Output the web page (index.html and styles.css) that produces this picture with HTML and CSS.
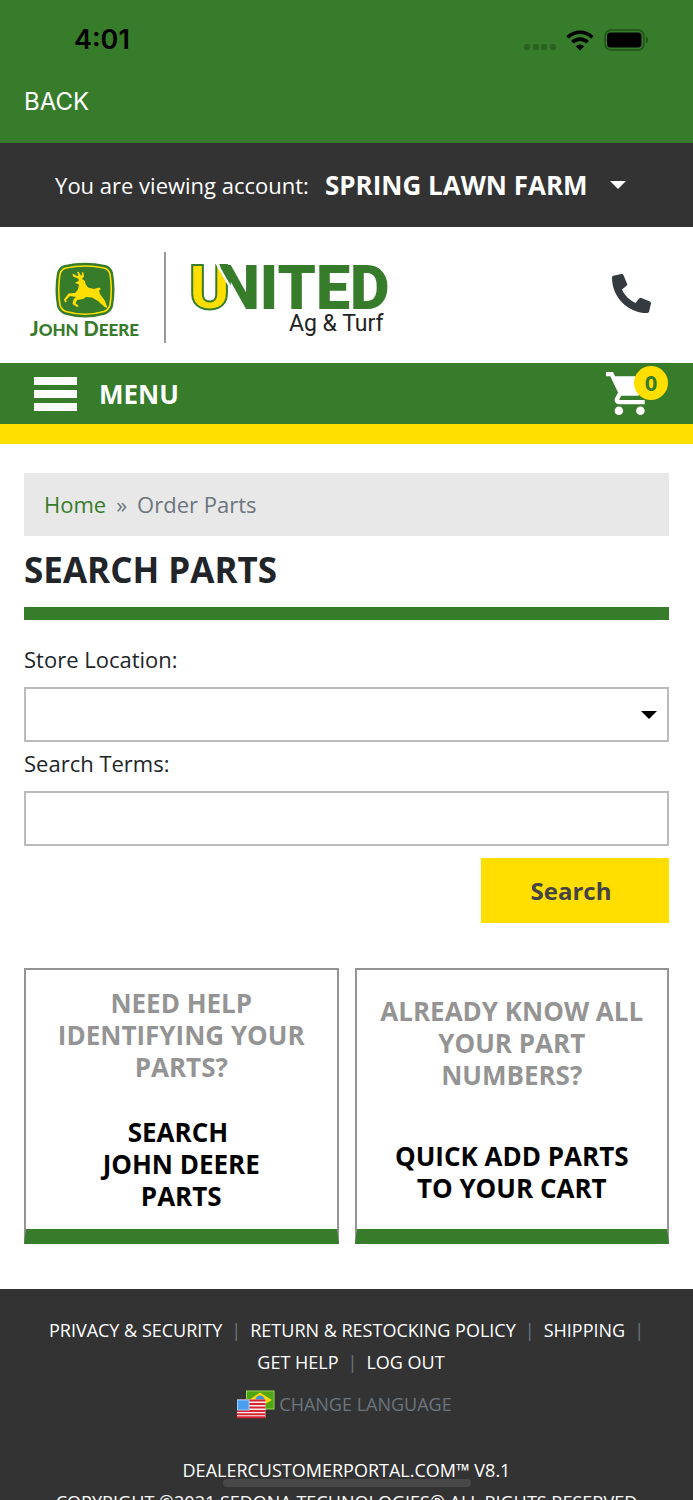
FILE: index.html
```html
<!DOCTYPE html>
<html lang="en">
<head>
    <meta charset="UTF-8">
    <meta name="viewport" content="width=device-width, initial-scale=1.0">
    <title>Search Parts</title>
    <link rel="stylesheet" href="styles.css">
</head>
<body>
    <div class="app">
        <div class="top-bar">
            <div class="status">
                <span class="time">4:01</span>
                <div class="status-icons">
                    <svg width="32" height="20" viewBox="0 0 32 20" fill="#2a6021">
                        <rect x="0" y="14" width="6" height="6" rx="2" />
                        <rect x="9" y="14" width="6" height="6" rx="2" />
                        <rect x="17" y="14" width="6" height="6" rx="2" />
                        <rect x="26" y="14" width="6" height="6" rx="2" />
                    </svg>
                    <svg width="28" height="21" viewBox="0 0 28 21">
                        <g fill="none" stroke="#000" stroke-width="3.6">
                            <path d="M1.6 7.4a17.6 17.6 0 0 1 24.8 0" />
                            <path d="M6.4 12.3a10.8 10.8 0 0 1 15.2 0" />
                        </g>
                        <path d="M14 20.5l-4.2-4.3a6 6 0 0 1 8.4 0z" />
                    </svg>
                    <svg width="44" height="22" viewBox="0 0 44 22">
                        <rect x="1" y="1" width="39" height="20" rx="6" fill="none" stroke="#1f4f19" stroke-width="1.4" />
                        <rect x="3" y="3.4" width="34.5" height="15" rx="3.5" />
                        <path d="M42 7.5q2 1 2 3.5t-2 3.5z" fill="#1f4f19" />
                    </svg>
                </div>
            </div>
            <a class="back" href="#">BACK</a>
        </div>

        <div class="account">
            <label for="account">You are viewing account:</label>
            <div class="select-wrap account-wrap">
                <select id="account">
                    <option>SPRING LAWN FARM</option>
                </select>
            </div>
        </div>

        <header class="header">
            <a href="#" aria-label="United Ag &amp; Turf">
                <svg class="logo" width="370" height="100" viewBox="26 243 370 100">
                    <!-- Deer badge -->
                    <path d="M65 266.5Q85 262 105 266.5Q110 268 111.5 273Q114.5 290 111.5 306Q110 311 105 313Q85 319 65 313Q60 311 58.5 306Q55.5 290 58.5 273Q60 268 65 266.5z" fill="#367c2b" stroke="#367c2b" stroke-width="3" />
                    <path d="M66 268Q85 264 104 268Q108.5 269 110 274Q112.5 290 110 305Q108.5 310 104 311.500Q85 317 66 311.5Q61.5 310 60 305Q57.5 290 60 274Q61.5 269 66 268z" fill="none" stroke="#ffde00" stroke-width="1.6" />
                    <path d="M75 283L79 280.500 78 278.500 73 276.500 72.500 273.500 77 276 78.500 275.500 77 272 78.500 271.800 81 275.500 82 275 81.800 272.500 83.300 272.300 84 276.500 82 279 85 281 85.500 284 88 287.500 94 289 99 287.500 101 289 99 290.500 100 294 105 301 107.500 308 104.500 307 98 301 92 297.500 86 297 83 299 77 300 75.500 303.500 79 306 77 307 72.500 304 73.500 299.500 76 297 70 296 66 300 67 301.500 65 302.500 64 299.500 68.500 293.500 75 293 78 289.500 79 284.500z" fill="#ffde00" />
                    <text x="30" y="336" class="logo-deere">J<tspan class="logo-small">OHN</tspan> D<tspan class="logo-small">EERE</tspan></text>
                    <rect x="164" y="252" width="2" height="91" fill="#999" />
                    <!-- The U shows below the diagonal of the N -->
                    <clipPath id="diagonal">
                        <path d="M216 260L246 312H396V260z" />
                    </clipPath>
                    <text x="189" y="309" class="logo-u">U</text>
                    <path d="M215 260L245 312" stroke="#fff" stroke-width="3" />
                    <text x="217" y="309" class="logo-united" clip-path="url(#diagonal)">NITED</text>
                    <text x="289" y="331" class="logo-turf">Ag &amp; Turf</text>
                </svg>
            </a>
            <a class="phone" href="#" aria-label="Call us">
                <svg width="39" height="39" viewBox="0 0 512 512" fill="#343a40">
                    <path transform="matrix(-1 0 0 1 512 0)" d="M493.4 24.6l-104-24c-11.3-2.6-22.9 3.3-27.5 13.9l-48 112c-4.2 9.8-1.4 21.3 6.9 28l60.6 49.6c-36 76.7-98.9 140.5-177.2 177.2l-49.6-60.6c-6.8-8.3-18.2-11.1-28-6.9l-112 48C3.9 366.5-2 378.1.6 389.4l24 104C27.1 504.2 36.7 512 48 512c256.1 0 464-207.5 464-464 0-11.2-7.7-20.9-18.6-23.4z" />
                </svg>
            </a>
        </header>

        <nav class="nav">
            <button class="menu" type="button">
                <span class="bars"><i></i><i></i><i></i></span>
                MENU
            </button>
            <a class="cart" href="#" aria-label="Cart">
                <svg width="43" height="43" viewBox="1 2 20 20" fill="#fff">
                    <path d="M7 18c-1.1 0-1.99.9-1.99 2S5.9 22 7 22s2-.9 2-2-.9-2-2-2zM1 2v2h2l3.6 7.59-1.35 2.45c-.16.28-.25.61-.25.96 0 1.1.9 2 2 2h12v-2H7.42c-.14 0-.25-.11-.25-.25l.03-.12.9-1.63h7.45c.75 0 1.41-.41 1.75-1.03l3.58-6.49A1 1 0 0 0 20 4H5.21l-.94-2H1zm16 16c-1.1 0-1.99.9-1.99 2s.89 2 1.99 2 2-.9 2-2-.9-2-2-2z" />
                </svg>
                <span class="badge">0</span>
            </a>
        </nav>

        <main class="content">
            <div class="breadcrumb">
                <a href="#">Home</a>
                <span>»</span>
                <span>Order Parts</span>
            </div>
            <h1>SEARCH PARTS</h1>

            <form class="search-form">
                <label for="store">Store Location:</label>
                <div class="select-wrap">
                    <select class="field" id="store">
                        <option></option>
                    </select>
                </div>
                <label for="terms">Search Terms:</label>
                <input class="field" type="text" id="terms">
                <button class="btn" type="button">Search</button>
            </form>

            <div class="cards">
                <a class="card" href="#">
                    <span class="question">NEED HELP IDENTIFYING YOUR PARTS?</span>
                    <span class="action">SEARCH&nbsp;<br>JOHN DEERE<br>PARTS</span>
                </a>
                <a class="card" href="#">
                    <span class="question">ALREADY KNOW ALL YOUR PART NUMBERS?</span>
                    <span class="action">QUICK ADD PARTS TO YOUR CART</span>
                </a>
            </div>
        </main>

        <footer class="footer">
            <ul class="links">
                <li><a href="#">PRIVACY &amp; SECURITY</a></li>
                <li><a href="#">RETURN &amp; RESTOCKING POLICY</a></li>
                <li><a href="#">SHIPPING</a></li>
                <li><a href="#">GET HELP</a></li>
                <li><a href="#">LOG OUT</a></li>
            </ul>
            <a class="language" href="#">
                <svg width="38" height="32" viewBox="0 -2 38 32">
                    <!-- Brazil -->
                    <rect x="9.5" y="1" width="27.5" height="18" fill="#4fa512" stroke="#9bd45a" />
                    <path d="M12 10l11-7.5 12 7.5-12 7z" fill="#fdd80c" />
                    <circle cx="23" cy="10" r="4.5" fill="#3c8fd8" />
                    <!-- USA -->
                    <rect x="0" y="9.5" width="28.5" height="18.5" fill="#f4f0f0" />
                    <path d="M0 10.5h28.5M0 14h28.5M0 17.5h28.5M0 21h28.5M0 24.2h28.5M0 27.3h28.5" stroke="#d8232e" stroke-width="2" />
                    <rect x="0.5" y="10" width="11.5" height="10" fill="#4b9ff0" stroke="#9accff" />
                </svg>
                CHANGE LANGUAGE
            </a>
            <p>DEALERCUSTOMERPORTAL.COM™ V8.1</p>
            <p>COPYRIGHT ©2021 SEDONA TECHNOLOGIES® ALL RIGHTS RESERVED</p>
        </footer>
        <div class="home-indicator"></div>
    </div>
</body>
</html>
```
FILE: styles.css
```css
* {
    box-sizing: border-box;
}
body {
    margin: 0;
    font-family: "Open Sans", sans-serif;
    font-size: 22px;
    line-height: 32px;
    color: #212529;
    background: #fff;
}
a {
    color: inherit;
    text-decoration: none;
}
button, input, select {
    font: inherit;
    color: inherit;
    border: none;
    border-radius: 0;
    background: none;
    padding: 0;
}
svg {
    display: block;
}
.app {
    position: relative;
    height: 100vh;
    overflow: hidden;
}

/* Status and back bar */
.top-bar {
    height: 143px;
    padding: 24px 24px 0;
    background: #367c2b;
    font-family: Inter, sans-serif;
}
.status {
    display: flex;
    align-items: center;
    justify-content: space-between;
    padding: 0 21px 0 50px;
    margin-bottom: 30px;
    color: #000;
}
.time {
    font-size: 27px;
    font-weight: 600;
}
.status-icons {
    display: flex;
    align-items: center;
    gap: 10px;
}
.back {
    font-size: 24px;
    color: #fff;
}

/* Account picker */
.account {
    display: flex;
    align-items: center;
    justify-content: center;
    gap: 16px;
    height: 84px;
    background: #333;
    color: #fff;
}
.select-wrap {
    position: relative;
}
.select-wrap select {
    appearance: none;
}
.select-wrap::after {
    content: "";
    position: absolute;
    right: 12px;
    top: 50%;
    margin-top: -4px;
    border: 8px solid transparent;
    border-top-color: currentColor;
    border-bottom: none;
    pointer-events: none;
}
.account-wrap select {
    padding-right: 50px;
    font-size: 26px;
    font-weight: 700;
}

/* Logo header */
.header {
    display: flex;
    align-items: center;
    justify-content: space-between;
    height: 136px;
    padding: 0 42px 4px 26px;
}
.logo-deere {
    font: 900 20px Lato, sans-serif;
    fill: #367c2b;
}
.logo-small {
    font-size: 17px;
}
.logo-u {
    font: 900 62px Roboto, sans-serif;
    fill: #ffde00;
    stroke: #367c2b;
    stroke-width: 2px;
}
.logo-united {
    font: 900 61px Roboto, sans-serif;
    fill: #367c2b;
}
.logo-turf {
    font: 23px Roboto, sans-serif;
    fill: #222;
}

/* Menu bar */
.nav {
    display: flex;
    align-items: center;
    justify-content: space-between;
    height: 81px;
    padding: 0 44px 0 34px;
    background: #367c2b;
    border-bottom: 20px solid #ffde00;
}
.menu {
    display: flex;
    align-items: center;
    gap: 22px;
    font-size: 26px;
    font-weight: 700;
    color: #fff;
}
.bars {
    display: flex;
    flex-direction: column;
    gap: 5px;
    width: 43px;
}
.bars i {
    height: 8px;
    background: #fff;
}
.cart {
    position: relative;
}
.badge {
    position: absolute;
    top: -6px;
    right: -19px;
    width: 34px;
    height: 34px;
    border-radius: 50%;
    background: #ffde00;
    color: #367c2b;
    font-weight: 700;
    text-align: center;
}

/* Page content */
.content {
    padding: 29px 24px 45px;
}
.breadcrumb {
    display: flex;
    gap: 10px;
    padding: 15px 20px 16px;
    background: #e8e8e8;
    color: #6c757d;
}
.breadcrumb a {
    color: #367c2b;
}
h1 {
    margin: 0 0 23px;
    padding: 10px 0 13px;
    border-bottom: 13px solid #367c2b;
    font-size: 35px;
    line-height: 48px;
}
.search-form {
    display: flex;
    flex-direction: column;
}
.search-form label {
    margin-bottom: 12px;
}
.field {
    display: block;
    width: 100%;
    height: 55px;
    padding: 0 12px;
    border: 2px solid #bbb;
}
.search-form .select-wrap {
    margin-bottom: 5px;
    color: #000;
}
.btn {
    align-self: flex-end;
    width: 188px;
    height: 65px;
    margin-top: 12px;
    padding-right: 8px;
    background: #ffde00;
    color: #444;
    font-size: 24px;
    font-weight: 700;
    cursor: pointer;
}
.cards {
    display: grid;
    grid-template-columns: 1fr 1fr;
    gap: 16px;
    margin-top: 45px;
}
.card {
    display: flex;
    flex-direction: column;
    justify-content: space-around;
    height: 276px;
    padding: 0 20px;
    border: 2px solid #949494;
    border-bottom: 15px solid #367c2b;
    font-size: 26px;
    font-weight: 700;
    text-align: center;
}
.question {
    color: #949494;
}
.action {
    color: #000;
}

/* Footer */
.footer {
    padding: 25px 24px 0;
    background: #333;
    color: #fff;
    font-size: 18px;
    text-align: center;
}
.links {
    display: flex;
    flex-wrap: wrap;
    justify-content: center;
    margin: 0;
    padding: 0;
    list-style: none;
}
.links li + li {
    margin-left: 9px;
}
.links li:not(:last-child)::after {
    content: "|";
    margin-left: 9px;
    color: #6c757d;
}
.language {
    display: flex;
    align-items: center;
    justify-content: center;
    gap: 4px;
    margin: 10px 4px 34px 0;
    color: #6c757d;
}
.footer p {
    margin: 0;
}
.home-indicator {
    position: absolute;
    left: 50%;
    bottom: 13px;
    width: 248px;
    height: 8px;
    margin-left: -124px;
    border-radius: 4px;
    background: #484848;
}
```
